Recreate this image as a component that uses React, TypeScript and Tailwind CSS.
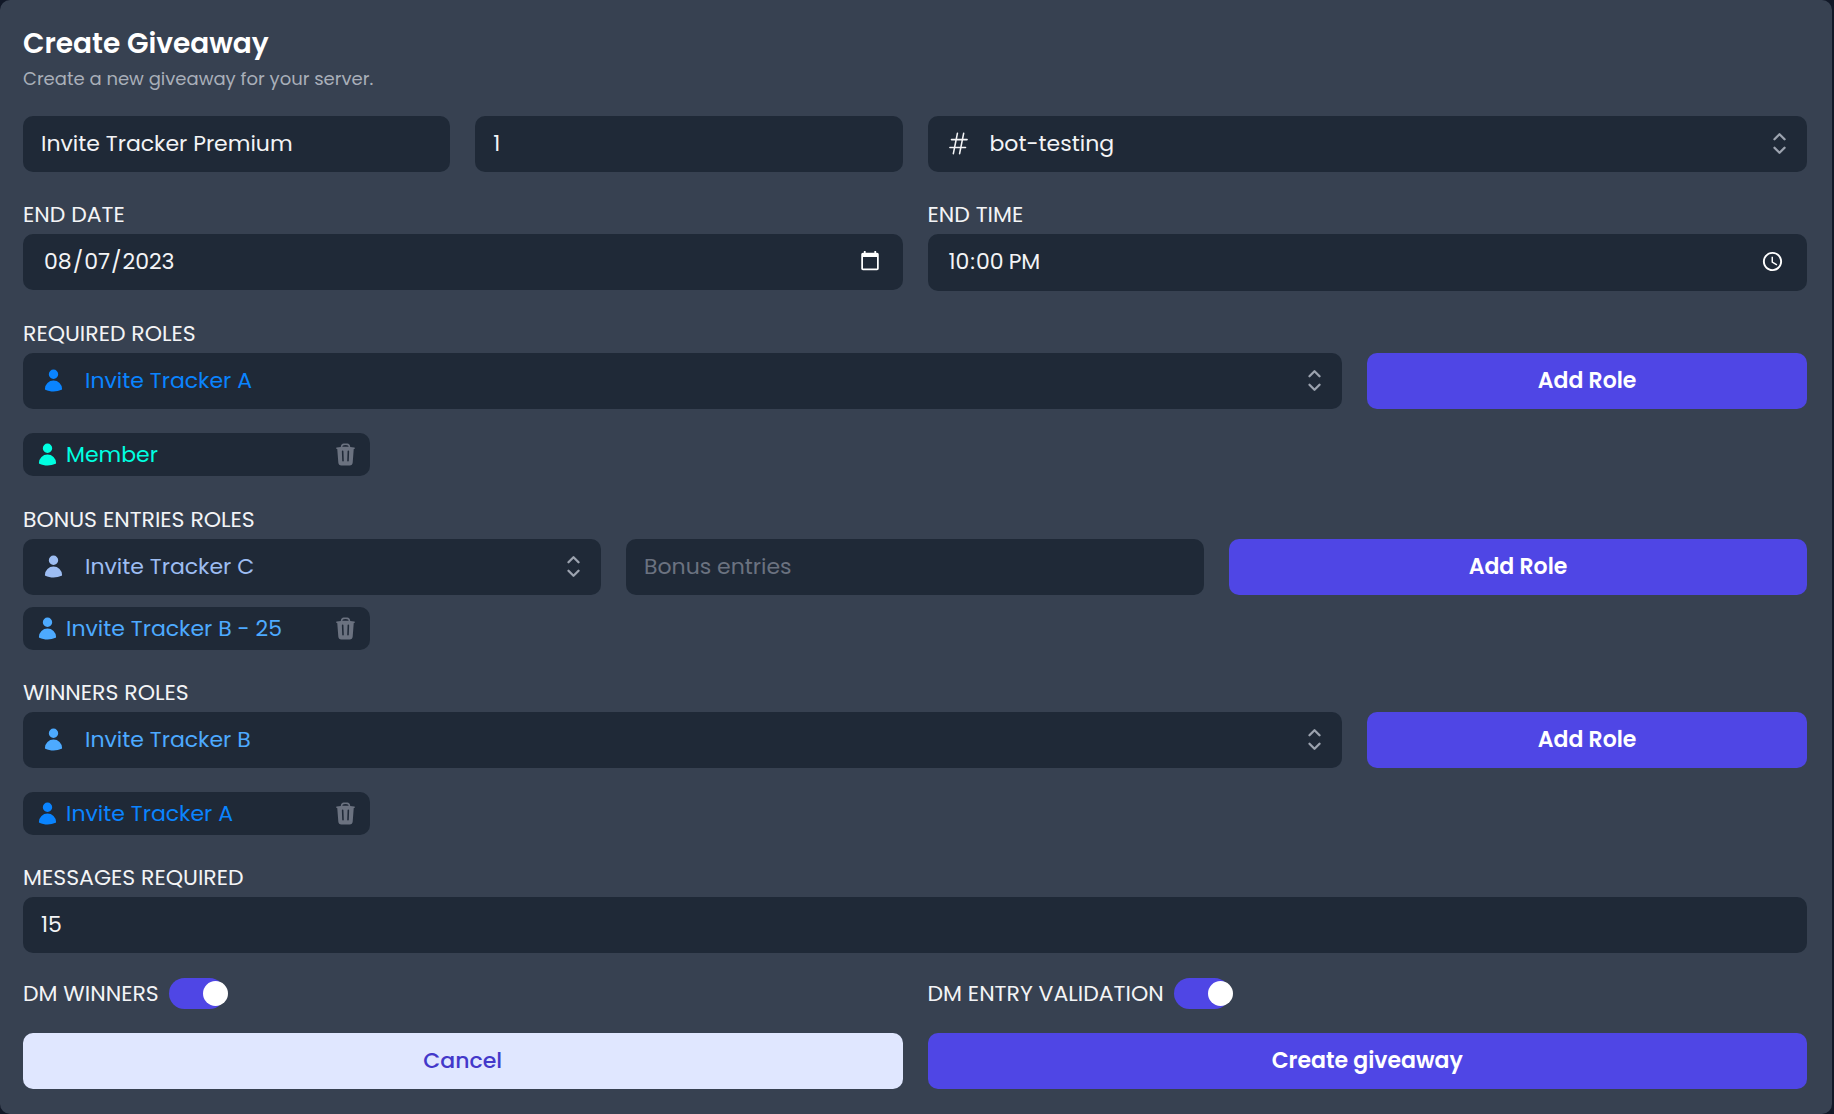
import React, { useState } from "react";
import {
  HiOutlineHashtag,
  HiUser,
  HiMiniChevronUpDown,
  HiTrash,
} from "react-icons/hi2";

const field =
  "block h-14 w-full appearance-none rounded-[10px] border-0 bg-[#1f2937] pb-0.5 text-[22px] outline-none placeholder:text-[#6b7280]";
const labelText = "block text-[22px] leading-7 text-[#f3f4f6]";
const primary =
  "h-14 w-full rounded-[10px] bg-[#4f46e5] pb-0.5 text-[22px] font-semibold text-white";

function Picker({
  id,
  name,
  value,
  icon,
  color,
}: {
  id: string;
  name: string;
  value: string;
  icon: React.ReactNode;
  color: string;
}) {
  return (
    <div className={`relative ${color}`}>
      <span className="pointer-events-none absolute inset-y-0 left-[18px] flex items-center pb-0.5">
        {icon}
      </span>
      <select id={id} aria-label={name} className={`${field} pr-14 pl-[62px]`}>
        <option>{value}</option>
      </select>
      <span className="pointer-events-none absolute inset-y-0 right-3 flex items-center pb-0.5 text-[#9ca3af]">
        <HiMiniChevronUpDown size={31} />
      </span>
    </div>
  );
}

function Chip({ text, color }: { text: string; color: string }) {
  return (
    <ul className="grid grid-cols-5 gap-3">
      <li className="flex h-[43px] items-center rounded-[10px] bg-[#1f2937] px-3">
        <span className={`flex flex-1 items-center gap-1.5 text-[22px] leading-7 ${color}`}>
          <HiUser size={25} />
          {text}
        </span>
        <button type="button" aria-label={`Remove ${text}`} className="text-[#6b7280]">
          <HiTrash size={25} />
        </button>
      </li>
    </ul>
  );
}

function Toggle({ id, label }: { id: string; label: string }) {
  const [on, setOn] = useState(true);
  return (
    <div className="flex items-center gap-2.5">
      <label htmlFor={id} className={labelText}>
        {label}
      </label>
      <span className="relative flex">
        <input
          id={id}
          type="checkbox"
          role="switch"
          checked={on}
          onChange={() => setOn(!on)}
          className="peer h-[31px] w-14 appearance-none rounded-full bg-[#6b7280] checked:bg-[#4f46e5]"
        />
        <span className="pointer-events-none absolute top-[3px] left-[3px] size-[25px] rounded-full bg-white peer-checked:left-[34px]" />
      </span>
    </div>
  );
}

function Group({
  id,
  label,
  children,
}: {
  id: string;
  label: string;
  children: React.ReactNode;
}) {
  return (
    <div>
      <label htmlFor={id} className={`${labelText} mb-[5px]`}>
        {label}
      </label>
      {children}
    </div>
  );
}

export default function App() {
  return (
    <div className="min-h-screen bg-[#111827] pr-0.5 font-['Poppins','Inter',sans-serif]">
      <form
        onSubmit={(e) => e.preventDefault()}
        className="min-h-screen rounded-[10px] bg-[#374151] pt-6 pr-[25px] pb-6 pl-[23px]"
      >
        <h1 className="text-[28px] leading-10 font-semibold text-white">Create Giveaway</h1>
        <p className="text-[18px] leading-[30px] text-[#a9afb9]">
          Create a new giveaway for your server.
        </p>

        <div className="mt-[22px] grid grid-cols-4 gap-[25px]">
          <input
            aria-label="Prize"
            defaultValue="Invite Tracker Premium"
            className={`${field} px-[18px] text-[#f3f4f6]`}
          />
          <input
            aria-label="Number of winners"
            defaultValue="1"
            className={`${field} px-[18px] text-[#f3f4f6]`}
          />
          <div className="col-span-2">
            <Picker
              id="channel"
              name="Channel"
              value="bot-testing"
              color="text-[#f3f4f6]"
              icon={<HiOutlineHashtag size={25} />}
            />
          </div>
        </div>

        <div className="mt-[29px] grid grid-cols-2 gap-[25px]">
          <Group id="date" label="END DATE">
            <input
              id="date"
              type="date"
              defaultValue="2023-08-07"
              className={`${field} px-5 text-[#f3f4f6] [color-scheme:dark]`}
            />
          </Group>
          <Group id="time" label="END TIME">
            <input
              id="time"
              type="time"
              defaultValue="22:00"
              className={`${field} h-[57px] px-5 text-[#f3f4f6] [color-scheme:dark]`}
            />
          </Group>
        </div>

        <div className="mt-[29px]">
          <Group id="required" label="REQUIRED ROLES">
            <div className="flex gap-[25px]">
              <div className="flex-3">
                <Picker
                  id="required"
                  name="Required roles"
                  value="Invite Tracker A"
                  color="text-[#0a84ff]"
                  icon={<HiUser size={25} />}
                />
              </div>
              <div className="flex-1">
                <button type="button" className={primary}>Add Role</button>
              </div>
            </div>
          </Group>
          <div className="mt-6">
            <Chip text="Member" color="text-[#00ffe1]" />
          </div>
        </div>

        <div className="mt-[30px]">
          <Group id="bonus" label="BONUS ENTRIES ROLES">
            <div className="grid grid-cols-3 gap-[25px]">
              <Picker
                id="bonus"
                name="Bonus entries roles"
                value="Invite Tracker C"
                color="text-[#9dbdf2]"
                icon={<HiUser size={25} />}
              />
              <input
                aria-label="Bonus entries"
                placeholder="Bonus entries"
                className={`${field} px-[18px] text-[#f3f4f6]`}
              />
              <button type="button" className={primary}>Add Role</button>
            </div>
          </Group>
          <div className="mt-3">
            <Chip text="Invite Tracker B - 25" color="text-[#4daaff]" />
          </div>
        </div>

        <div className="mt-[29px]">
          <Group id="winners" label="WINNERS ROLES">
            <div className="flex gap-[25px]">
              <div className="flex-3">
                <Picker
                  id="winners"
                  name="Winners roles"
                  value="Invite Tracker B"
                  color="text-[#4daaff]"
                  icon={<HiUser size={25} />}
                />
              </div>
              <div className="flex-1">
                <button type="button" className={primary}>Add Role</button>
              </div>
            </div>
          </Group>
          <div className="mt-6">
            <Chip text="Invite Tracker A" color="text-[#0a84ff]" />
          </div>
        </div>

        <div className="mt-[29px]">
          <Group id="messages" label="MESSAGES REQUIRED">
            <input
              id="messages"
              defaultValue="15"
              className={`${field} px-[18px] text-[#f3f4f6]`}
            />
          </Group>
        </div>

        <div className="mt-[25px] grid grid-cols-2 gap-x-[25px] gap-y-6">
          <Toggle id="dm-winners" label="DM WINNERS" />
          <Toggle id="dm-entry" label="DM ENTRY VALIDATION" />
          <button
            type="button"
            className="h-14 rounded-[10px] bg-[#e0e7ff] pb-0.5 text-[22px] font-medium text-[#4338ca]"
          >
            Cancel
          </button>
          <button type="submit" className={primary}>Create giveaway</button>
        </div>
      </form>
    </div>
  );
}
